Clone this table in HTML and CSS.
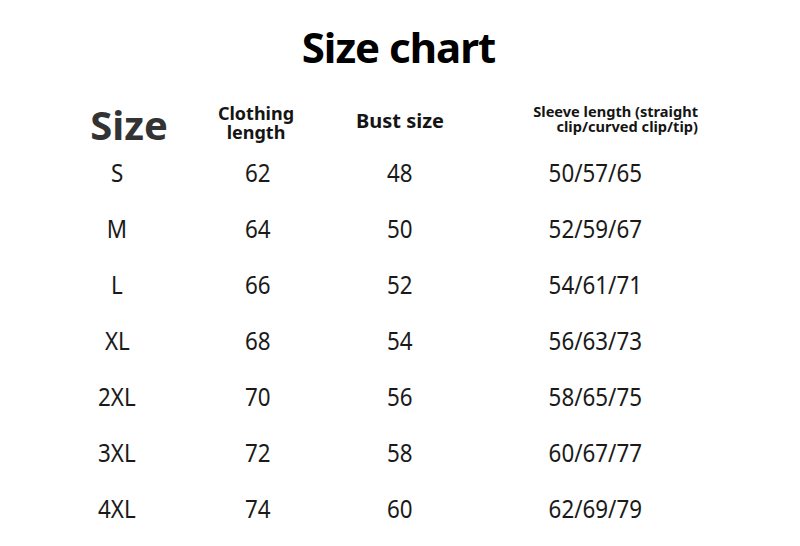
FILE: index.html
```html
<!DOCTYPE html>
<html>
<head>
<meta charset="utf-8">
<link rel="stylesheet" href="styles.css">
</head>
<body>
<h1 class="title">Size chart</h1>
<div class="chart">
  <div class="hd hd-size">Size</div>
  <div class="hd hd-len">Clothing<br>length</div>
  <div class="hd hd-bust">Bust size</div>
  <div class="hd hd-sleeve">Sleeve length (straight<br>clip/curved clip/tip)</div>

  <div class="cell"><span>S</span></div><div class="cell"><span>62</span></div><div class="cell"><span>48</span></div><div class="cell"><span>50/57/65</span></div>
  <div class="cell"><span>M</span></div><div class="cell"><span>64</span></div><div class="cell"><span>50</span></div><div class="cell"><span>52/59/67</span></div>
  <div class="cell"><span>L</span></div><div class="cell"><span>66</span></div><div class="cell"><span>52</span></div><div class="cell"><span>54/61/71</span></div>
  <div class="cell"><span>XL</span></div><div class="cell"><span>68</span></div><div class="cell"><span>54</span></div><div class="cell"><span>56/63/73</span></div>
  <div class="cell"><span>2XL</span></div><div class="cell"><span>70</span></div><div class="cell"><span>56</span></div><div class="cell"><span>58/65/75</span></div>
  <div class="cell"><span>3XL</span></div><div class="cell"><span>72</span></div><div class="cell"><span>58</span></div><div class="cell"><span>60/67/77</span></div>
  <div class="cell"><span>4XL</span></div><div class="cell"><span>74</span></div><div class="cell"><span>60</span></div><div class="cell"><span>62/69/79</span></div>
</div>
</body>
</html>
```
FILE: styles.css
```css
html, body {
  margin: 0;
  padding: 0;
  background: #ffffff;
  width: 800px;
  height: 546px;
  overflow: hidden;
  font-family: "Noto Sans", "Open Sans", sans-serif;
}
.title {
  margin: 22px 0 0 0;
  text-align: center;
  width: 797px;
  font-size: 42px;
  line-height: 49px;
  letter-spacing: -1px;
  font-weight: 700;
  color: #000;
}
.chart {
  display: grid;
  grid-template-columns: 154px 128px 156px 234px;
  grid-template-rows: 73px repeat(7, 56px);
  padding-left: 40px;
}
.hd {
  align-self: start;
  text-align: center;
  font-weight: 700;
  color: #151515;
}
.hd-size {
  font-size: 40px;
  line-height: 40px;
  padding-top: 34px;
  padding-left: 24px;
  color: #333;
}
.hd-len {
  font-size: 18px;
  line-height: 18.5px;
  padding-top: 33px;
  margin-left: -4px;
}
.hd-bust {
  font-size: 20px;
  line-height: 20px;
  padding-top: 40px;
}
.hd-sleeve {
  font-size: 14.6px;
  line-height: 14.6px;
  padding-top: 33px;
  padding-right: 14px;
  text-align: right;
}
.cell {
  text-align: center;
  font-size: 26px;
  line-height: 56px;
  color: #1a1a1a;
}
.cell span {
  display: inline-block;
  transform: scaleX(0.86);
}
```
